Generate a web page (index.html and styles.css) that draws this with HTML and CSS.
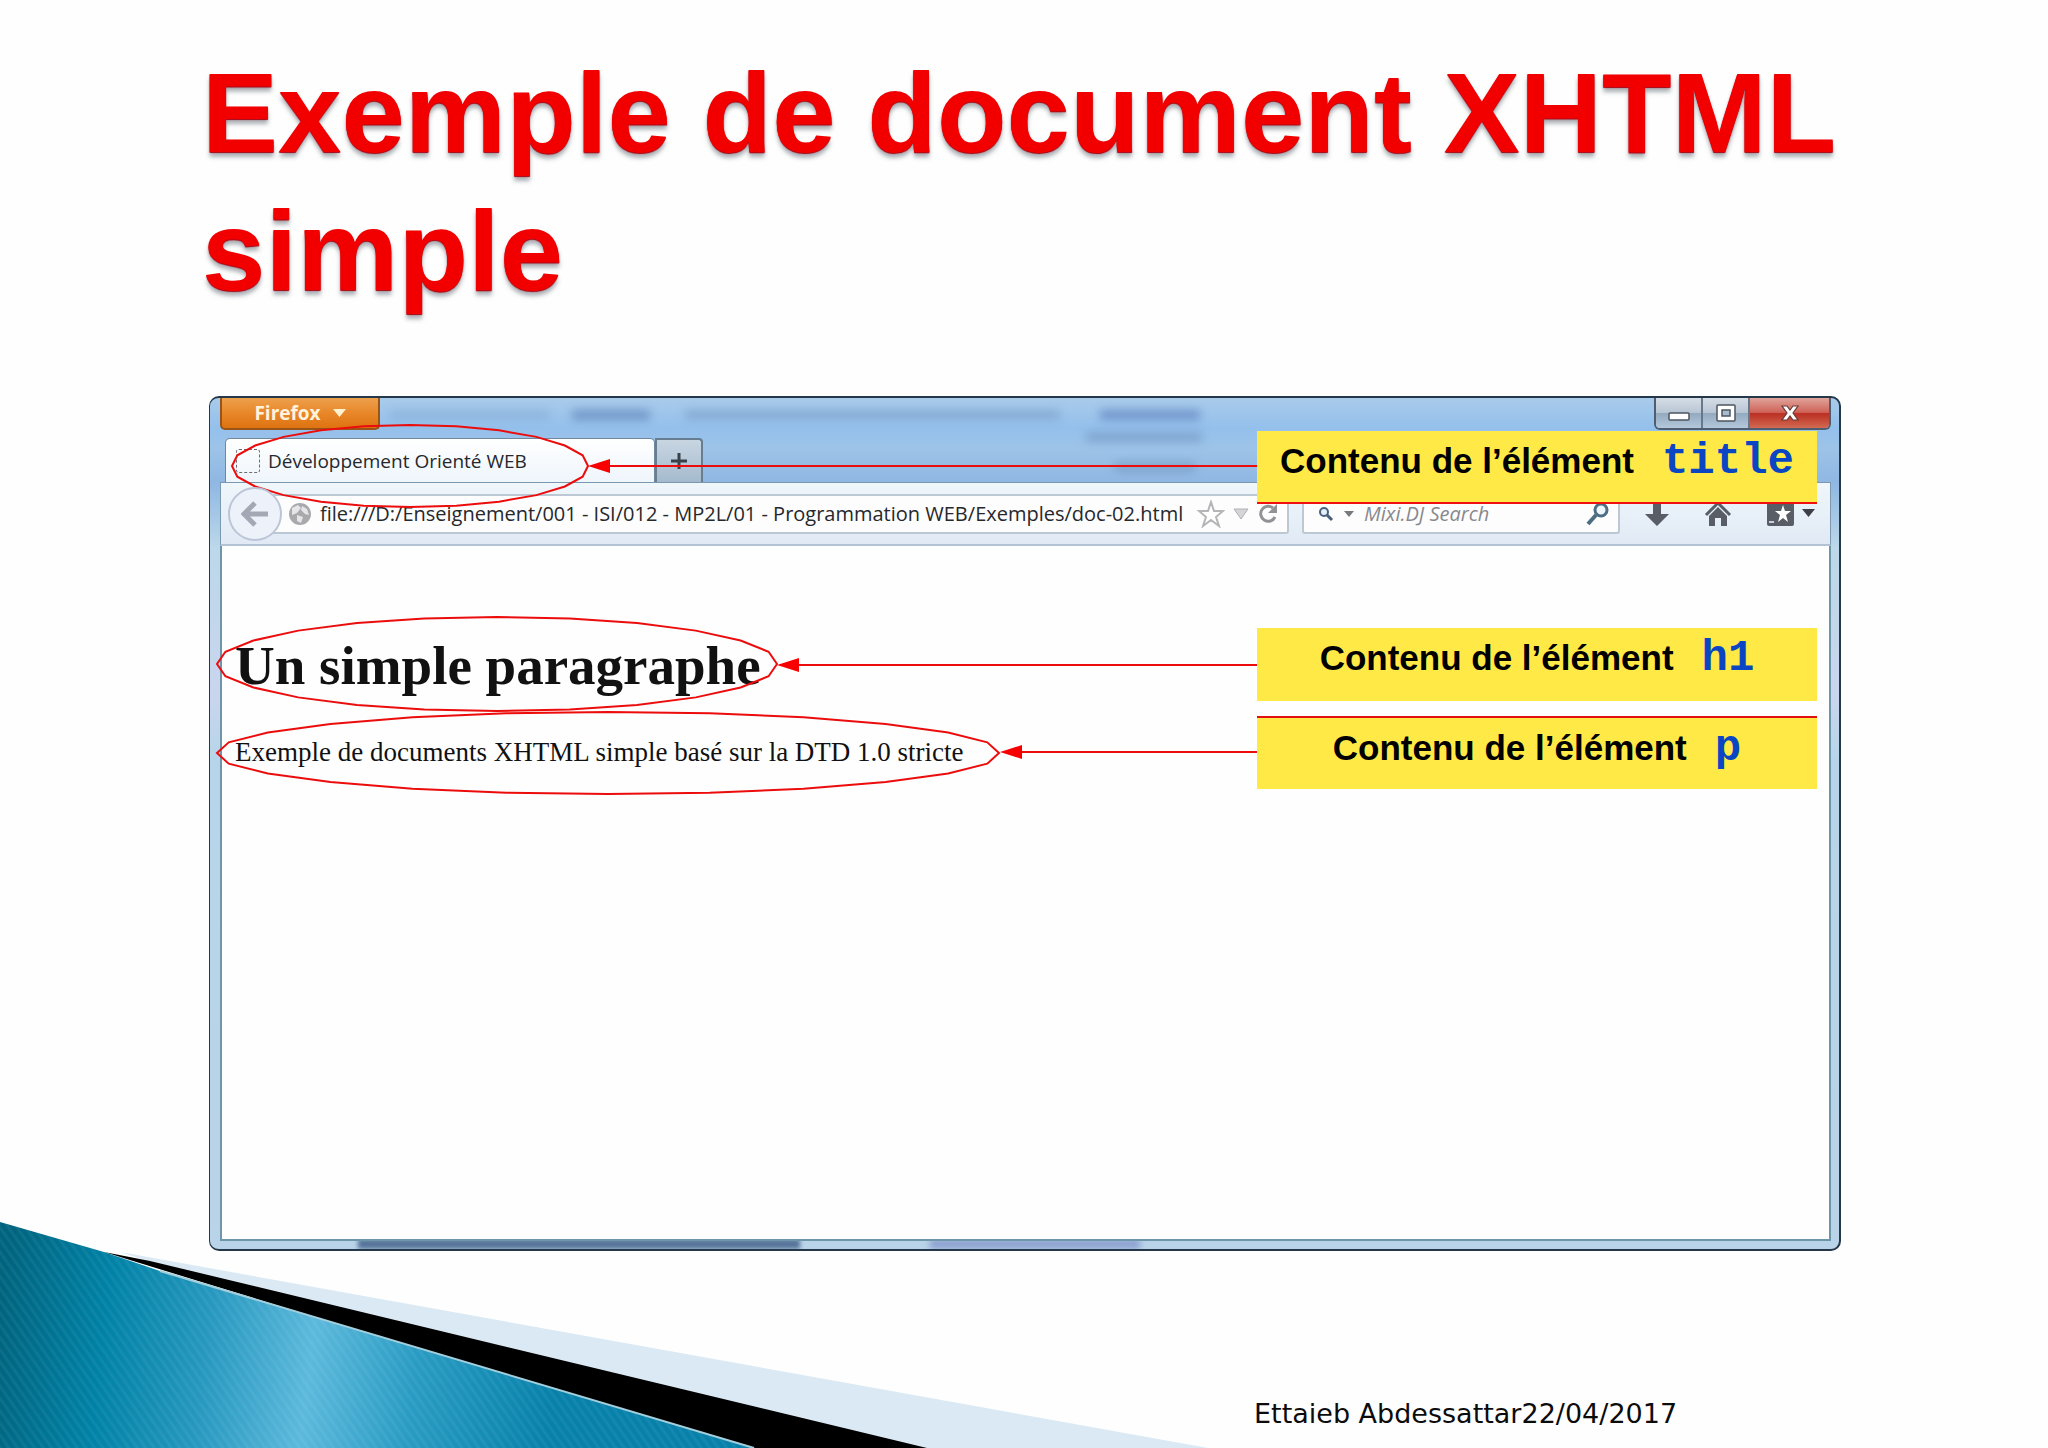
FILE: index.html
```html
<!DOCTYPE html>
<html lang="fr">
<head>
  <meta charset="UTF-8" />
  <meta name="viewport" content="width=device-width, initial-scale=1" />
  <title>Exemple de document XHTML simple</title>
  <link rel="stylesheet" href="styles.css">
</head>
<body>

  <main class="slide">

    <!-- Corner decoration -->
    <svg class="corner" width="1210" height="230" viewBox="0 0 1210 230" aria-hidden="true">
      <defs>
        <linearGradient id="teal" gradientUnits="userSpaceOnUse" x1="0" y1="100" x2="740" y2="190">
          <stop offset="0" stop-color="#00647f" />
          <stop offset="0.14" stop-color="#0082a6" />
          <stop offset="0.28" stop-color="#2798bf" />
          <stop offset="0.42" stop-color="#5cb9dc" />
          <stop offset="0.56" stop-color="#2a9cc3" />
          <stop offset="0.75" stop-color="#0781aa" />
          <stop offset="1" stop-color="#0781aa" />
        </linearGradient>
        <pattern id="stripes" width="7" height="7" patternUnits="userSpaceOnUse" patternTransform="rotate(-35)">
          <rect width="3" height="7" fill="#fff" opacity="0.05" />
        </pattern>
      </defs>
      <polygon points="120,34 1208,230 740,230" fill="#dae9f3" />
      <polygon points="104,34 150,43 927,230 740,230" fill="#000" />
      <path d="M0 4 L104 34 L160 53 L754 230 L0 230 Z" fill="url(#teal)" />
      <path d="M0 4 L104 34 L160 53 L754 230 L0 230 Z" fill="url(#stripes)" />
      <path d="M160 53 L754 230" fill="none" stroke="#a3cfdd" stroke-width="2" />
    </svg>

    <h1 class="slide-title">Exemple de document XHTML simple</h1>

    <section class="window">
      <div class="ghosts" aria-hidden="true">
        <span class="ghost g1"></span>
        <span class="ghost g2"></span>
        <span class="ghost g3"></span>
        <span class="ghost g4"></span>
        <span class="ghost g5"></span>
        <span class="ghost g6"></span>
        <span class="ghost g7"></span>
        <span class="ghost g8"></span>
      </div>

      <div class="titlebar">
        <button class="menu-button" type="button">Firefox
          <svg width="13" height="8" viewBox="0 0 13 8"><path d="M0 0h13L6.5 8z" fill="#fff3cf" /></svg>
        </button>
        <div class="window-buttons">
          <button type="button" aria-label="Réduire">
            <svg width="22" height="22" viewBox="0 0 22 22"><rect x="1" y="11" width="20" height="7" rx="1" fill="#fff" stroke="#4c5560" stroke-width="1.5" /></svg>
          </button>
          <button type="button" aria-label="Agrandir">
            <svg width="22" height="22" viewBox="0 0 22 22"><rect x="2" y="3" width="18" height="16" rx="1" fill="#fff" stroke="#4c5560" stroke-width="1.5" /><rect x="7" y="8" width="8" height="6" fill="#a9bccd" stroke="#4c5560" stroke-width="1.5" /></svg>
          </button>
          <button class="close" type="button" aria-label="Fermer">
            <svg width="22" height="22" viewBox="0 0 22 22"><path d="M3 4h5l3 4 3-4h5l-5 7 5 7h-5l-3-4-3 4H3l5-7z" fill="#fff" stroke="#6b3a38" stroke-width="1.2" /></svg>
          </button>
        </div>
      </div>

      <div class="tabs">
        <div class="tab">
          <span class="favicon"></span>
          <span>Développement Orienté WEB</span>
        </div>
        <button class="new-tab" type="button" aria-label="Nouvel onglet">
          <svg width="18" height="18" viewBox="0 0 18 18"><path d="M9 1v16M1 9h16" stroke="#39424b" stroke-width="3" /></svg>
        </button>
      </div>

      <div class="toolbar">
        <button class="back" type="button" aria-label="Précédent">
          <svg width="28" height="28" viewBox="0 0 28 28"><path d="M14 3L3 14l11 11M4 14h23" fill="none" stroke="#a3a8b4" stroke-width="5" /></svg>
        </button>
        <div class="field url">
          <svg width="24" height="24" viewBox="0 0 24 24"><circle cx="12" cy="12" r="11" fill="#a9a9ad" /><path d="M4 6l6-3 3 3-4 5-5 2zM14 4l5 3 2 6-4-1-4-4zM9 13l6 2-2 6-4-2z" fill="#e6e6e9" /></svg>
          <input type="text" aria-label="Adresse" value="file:///D:/Enseignement/001 - ISI/012 - MP2L/01 - Programmation WEB/Exemples/doc-02.html">
          <svg width="28" height="28" viewBox="0 0 28 28"><path d="M14 2l3 9h9l-7 6 3 9-8-6-8 6 3-9-7-6h9z" fill="#fff" stroke="#b5b5b8" stroke-width="2" /></svg>
          <svg width="16" height="12" viewBox="0 0 16 12"><path d="M1 1h14l-7 10z" fill="#d5d5d8" stroke="#b0b0b4" /></svg>
          <svg width="22" height="22" viewBox="0 0 22 22"><path d="M16 5a7.5 7.5 0 1 0 2 9" fill="none" stroke="#929296" stroke-width="3" /><path d="M20 1v9h-9z" fill="#929296" /></svg>
        </div>
        <div class="field search">
          <svg width="16" height="16" viewBox="0 0 16 16"><circle cx="6" cy="6" r="4" fill="#e4f0fa" stroke="#47617c" stroke-width="2" /><path d="M9 9l5 5" stroke="#47617c" stroke-width="3" /></svg>
          <svg width="10" height="6" viewBox="0 0 10 6"><path d="M0 0h10L5 6z" fill="#76797d" /></svg>
          <input type="text" aria-label="Recherche" placeholder="Mixi.DJ Search">
          <svg width="24" height="24" viewBox="0 0 24 24"><circle cx="15" cy="8" r="6" fill="#eef6fb" stroke="#4c6d82" stroke-width="3" /><path d="M10 13l-8 9" stroke="#4c6d82" stroke-width="4" /></svg>
        </div>
        <div class="tools">
          <button type="button" aria-label="Téléchargements">
            <svg width="26" height="28" viewBox="0 0 26 28"><path d="M9 1h8v13h8L13 26 1 14h8z" fill="#595d66" /></svg>
          </button>
          <button type="button" aria-label="Accueil">
            <svg width="28" height="28" viewBox="0 0 28 28"><path d="M2 15L14 3l12 12" fill="none" stroke="#595d66" stroke-width="3" /><path d="M5 16l9-9 9 9v10h-6v-8h-6v8H5z" fill="#595d66" /></svg>
          </button>
          <button type="button" aria-label="Marque-pages">
            <svg width="50" height="28" viewBox="0 0 50 28"><rect x="1" y="1" width="27" height="25" rx="2" fill="#595d66" /><path d="M3 22h5" stroke="#c9ced8" stroke-width="2" /><path d="M17 5l2 6h6l-5 4 2 7-5-4-5 4 2-7-5-4h6z" fill="#fff" /><path d="M36 9h13l-6.5 8z" fill="#3d4046" /></svg>
          </button>
        </div>
      </div>

      <article class="page">
        <h2>Un simple paragraphe</h2>
        <p>Exemple de documents XHTML simple basé sur la DTD 1.0 stricte</p>
      </article>

      <!-- Rings and arrows drawn over the browser window -->
      <svg class="marks" aria-hidden="true">
        <defs>
          <polygon id="ring" vector-effect="non-scaling-stroke" points="100,0 97,26 87,50 71,71 50,87 26,97 0,100 -26,97 -50,87 -71,71 -87,50 -97,26 -100,0 -97,-26 -87,-50 -71,-71 -50,-87 -26,-97 0,-100 26,-97 50,-87 71,-71 87,-50 97,-26" />
          <path id="head" d="M0 0L22 -7V7z" />
        </defs>
        <use href="#ring" transform="translate(200 68) scale(1.78 .41)" />
        <use href="#ring" transform="translate(287 266) scale(2.8 .47)" />
        <use href="#ring" transform="translate(398 355) scale(3.91 .41)" />
        <line x1="395" y1="68" x2="70%" y2="68" />
        <line x1="585" y1="267" x2="70%" y2="267" />
        <line x1="810" y1="354" x2="70%" y2="354" />
        <use class="head" href="#head" x="378" y="68" />
        <use class="head" href="#head" x="567" y="267" />
        <use class="head" href="#head" x="790" y="354" />
      </svg>

      <div class="note note-title">Contenu de l’élément <code>title</code></div>
      <div class="note note-h1">Contenu de l’élément <code>h1</code></div>
      <div class="note note-p">Contenu de l’élément <code>p</code></div>
    </section>

    <footer class="slide-footer"><span>Ettaieb Abdessattar</span><span>22/04/2017</span></footer>

  </main>

</body>
</html>
```

FILE: styles.css
```css
* {
  box-sizing: border-box;
}

body {
  margin: 0;
  background: #fefefe;
}

button,
input {
  margin: 0;
  padding: 0;
  border: 0;
  background: none;
  font: inherit;
  color: inherit;
}

svg {
  display: block;
  flex: none;
}

.slide {
  position: relative;
  display: flex;
  flex-direction: column;
  min-height: 100vh;
  padding: 44px 207px 0 209px;
}

.corner {
  position: absolute;
  left: 0;
  bottom: 0;
}

.slide-title {
  margin: 0 -20px 76px -7px;
  font: bold 114px/138px "Liberation Sans", Arial, sans-serif;
  color: #f20000;
  text-shadow: 0 1px 1px #a80010, 0 5px 4px rgba(90, 100, 110, 0.5);
}

/* Browser window */
.window {
  position: relative;
  flex: 1;
  display: flex;
  flex-direction: column;
  padding: 0 8px 8px 10px;
  border: 2px solid #24384a;
  border-left-width: 1px;
  border-radius: 10px;
  background: linear-gradient(to bottom, #a9cbea 0, #94c0ec 30px, #9dc3e8 50px, #8fb7e2 84px, #bcd8ea 150px, #c9d5ee 300px, #b7d5ea 360px, #b9d3e8 100%);
  font-family: "Open Sans", "Noto Sans", sans-serif;
}

.ghosts {
  position: absolute;
  inset: 0;
  overflow: hidden;
  border-radius: 8px;
}

.ghost {
  position: absolute;
  height: 10px;
  background: #6f93bd;
  filter: blur(5px);
  opacity: 0.6;
}

.g1 { left: 180px; top: 12px; width: 160px; opacity: 0.3; }
.g2 { left: 362px; top: 12px; width: 78px; background: #5578b0; }
.g3 { left: 475px; top: 12px; width: 375px; opacity: 0.5; }
.g4 { left: 890px; top: 12px; width: 100px; background: #5375b6; }
.g5 { left: 876px; top: 34px; width: 116px; }
.g6 { left: 905px; top: 64px; width: 80px; }
.g7 { left: 148px; bottom: 0; width: 442px; background: #4d6b92; opacity: 0.9; filter: blur(2px); }
.g8 { left: 720px; bottom: 0; width: 210px; background: #6f7fc0; filter: blur(3px); }

.titlebar {
  position: relative;
  display: flex;
  justify-content: space-between;
  align-items: flex-start;
  height: 40px;
}

.menu-button {
  display: flex;
  justify-content: center;
  align-items: center;
  gap: 12px;
  width: 160px;
  height: 32px;
  border: 2px solid #9a5418;
  border-top: 0;
  border-radius: 0 0 5px 5px;
  background: linear-gradient(#eda04c, #e8872a 50%, #de7310);
  font-size: 19px;
  font-weight: 700;
  color: #fff3dc;
}

.window-buttons {
  display: flex;
  height: 32px;
  border: 2px solid #4e5e70;
  border-top: 0;
  border-radius: 0 0 6px 6px;
  overflow: hidden;
}

.window-buttons button {
  display: flex;
  justify-content: center;
  align-items: center;
  width: 47px;
  border-right: 2px solid #66788a;
  background: linear-gradient(#d5dde6, #b9c6d4 48%, #94aabf 52%, #b4c8dc);
}

.window-buttons .close {
  width: 79px;
  border-right: 0;
  background: linear-gradient(#e0a49b, #cf6257 48%, #bb2f22 52%, #d26a52);
}

.tabs {
  position: relative;
  display: flex;
  height: 44px;
  padding-left: 5px;
}

.tab {
  display: flex;
  align-items: center;
  gap: 8px;
  width: 430px;
  padding-left: 10px;
  border: 1px solid #70879c;
  border-bottom: 0;
  border-radius: 5px 5px 0 0;
  background: linear-gradient(#fff, #eef5fb);
  font-size: 19px;
  color: #26282c;
}

.favicon {
  width: 24px;
  height: 24px;
  border: 1px dashed #6c6c70;
  border-radius: 3px;
}

.new-tab {
  display: flex;
  justify-content: center;
  align-items: center;
  width: 48px;
  border: 2px solid #667d92;
  border-bottom: 0;
  border-radius: 0 4px 0 0;
  background: linear-gradient(#c8d6e2, #a5bace);
}

.toolbar {
  position: relative;
  display: flex;
  align-items: center;
  height: 64px;
  padding: 0 14px 0 7px;
  border: 1px solid #7a98b0;
  border-bottom: 2px solid #b4c3d3;
  background: linear-gradient(#eff7fb, #e1e9f5);
}

.back {
  position: relative;
  z-index: 1;
  display: flex;
  justify-content: center;
  align-items: center;
  width: 54px;
  height: 54px;
  border: 2px solid #bcc5d6;
  border-radius: 50%;
  background: #edf2fa;
}

.field {
  display: flex;
  align-items: center;
  height: 40px;
  border: 2px solid #bcc8d4;
  border-radius: 3px;
  background: #fdfdfe;
}

.field input {
  flex: 1;
  min-width: 0;
  height: 100%;
  outline: 0;
}

.url {
  flex: 1;
  gap: 8px;
  margin-left: -20px;
  padding: 0 8px 0 24px;
  font-size: 20px;
  color: #26282c;
}

.search {
  gap: 10px;
  width: 318px;
  margin-left: 13px;
  padding: 0 8px 0 14px;
  font-size: 20px;
  font-style: italic;
}

.search input::placeholder {
  color: #88898d;
  opacity: 1;
}

.tools {
  display: flex;
  gap: 34px;
  padding-left: 24px;
}

.page {
  position: relative;
  flex: 1;
  padding: 74px 13px 0;
  border: 1px solid #6d97a8;
  border-width: 0 2px 2px;
  background: #fefefe;
  font-family: "Liberation Serif", "Times New Roman", serif;
  color: #111;
}

.page h2 {
  margin: 0 0 24px;
  font-size: 55px;
  line-height: 92px;
}

.page p {
  margin: 0;
  font-size: 27px;
  line-height: 32px;
}

/* Annotations */
.marks {
  position: absolute;
  left: 0;
  top: 0;
  width: 100%;
  height: 100%;
  overflow: visible;
  fill: none;
  stroke: #ec0c0c;
  stroke-width: 2px;
  pointer-events: none;
}

.marks .head {
  fill: #f80000;
  stroke: none;
}

.note {
  position: absolute;
  right: 22px;
  display: flex;
  justify-content: center;
  align-items: baseline;
  gap: 28px;
  width: 560px;
  height: 73px;
  background: #fee946;
  font: bold 35px/60px "Liberation Sans", Arial, sans-serif;
  color: #000;
  white-space: nowrap;
}

.note code {
  font: bold 44px/60px "Liberation Mono", "Courier New", monospace;
  color: #0a46c4;
}

.note-title {
  top: 33px;
  border-bottom: 2px solid #f01010;
}

.note-h1 {
  top: 230px;
}

.note-p {
  top: 318px;
  border-top: 2px solid #e01010;
}

.slide-footer {
  display: flex;
  height: 197px;
  padding: 147px 0 0 1045px;
  font: 27px/32px "DejaVu Sans", Verdana, sans-serif;
  color: #0c0c0c;
  white-space: nowrap;
}
```
